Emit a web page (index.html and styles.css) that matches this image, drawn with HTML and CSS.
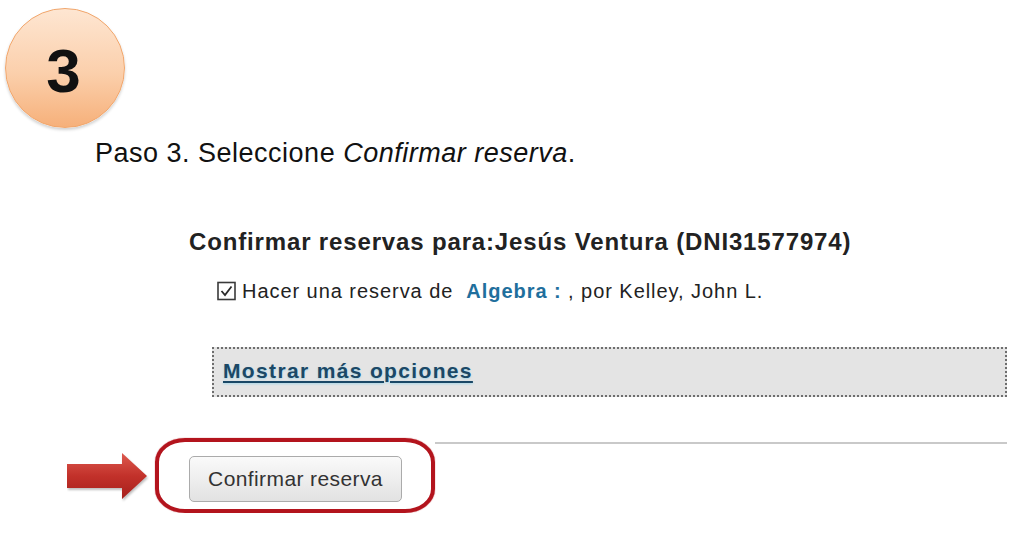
FILE: index.html
```html
<!DOCTYPE html>
<html>
<head>
<meta charset="utf-8">
<meta name="viewport" content="width=device-width, initial-scale=1.0">
<link rel="stylesheet" href="styles.css">
</head>
<body>

<div class='badge'><span class='badge-num'>3</span></div>

<p class='step'>Paso 3. Seleccione <i>Confirmar reserva</i>.</p>

<div class='form'>
  <h2 class='title'>Confirmar reservas para:Jesús Ventura (DNI31577974)</h2>

  <div class='item'>
    <svg class='check' width="19" height="20" viewBox="0 0 19 20">
      <rect x="1" y="1.5" width="17" height="17" fill="#fff" stroke="#3a3a3a" stroke-width="1.6"/>
      <path d="M4.5 10 L8 14 L14.5 5.5" fill="none" stroke="#2a2a2a" stroke-width="1.8"/>
    </svg>
    <span>Hacer una reserva de&nbsp; <b class='title-link'>Algebra :</b> , por Kelley, John L.</span>
  </div>

  <div class='more'>
    <a href="#" class='more-link'>Mostrar más opciones</a>
  </div>
</div>

<div class='actions'>
  <svg class='arrow' width="82" height="50" viewBox="0 0 82 50">
    <defs>
      <linearGradient id="ag" x1="0" y1="0" x2="0" y2="1">
        <stop offset="0" stop-color="#dd5a4f"/>
        <stop offset="0.5" stop-color="#c2312a"/>
        <stop offset="1" stop-color="#a6201c"/>
      </linearGradient>
    </defs>
    <path d="M0 11 H55 V0 L80 23 L55 46 V35 H0 Z" fill="url(#ag)" style="filter: drop-shadow(1px 2px 1px rgba(0,0,0,0.25))"/>
  </svg>
  <div class='ring'>
    <button class='btn'>Confirmar reserva</button>
  </div>
  <div class='rule'></div>
</div>

</body>
</html>
```

FILE: styles.css
```css
* {box-sizing: border-box;}
body {margin: 0; background: #fff; font-family: "Liberation Sans", Arial, sans-serif; color: #111;}

.badge {margin: 8px 0 0 5px; width: 120px; height: 120px; border-radius: 50%; border: 1px solid #f1a66c; background: linear-gradient(#fee6d2, #fbcfab 55%, #f6b07a); box-shadow: 0 2px 3px rgba(0,0,0,0.18); display: flex; align-items: center; justify-content: center;}
.badge-num {font-size: 62px; font-weight: bold; color: #111; line-height: 1; margin-top: 6px; margin-left: -3px;}

.step {margin: 10px 0 0 95px; font-size: 27px; line-height: 30px; letter-spacing: 0.5px; color: #111;}

.form {padding-left: 189px;}
.title {margin: 59px 0 0 0; font-size: 24px; line-height: 30px; letter-spacing: 0.85px; font-weight: bold; color: #222;}

.item {margin: 21px 0 0 28px; display: flex; align-items: center; font-size: 20px; line-height: 26px; letter-spacing: 0.95px; color: #222;}
.check {margin-right: 6px; flex: none;}
.title-link {color: #1f6f9d;}

.more {margin: 43px 17px 0 23px; height: 50px; border: 2px dotted #6e6e6e; background: #e4e4e4; padding: 10px 0 0 9px;}
.more-link {font-size: 21px; font-weight: bold; letter-spacing: 1.35px; color: #1b4866; text-decoration: underline; text-decoration-thickness: 2px; text-underline-offset: 3px; text-shadow: 0 1px 2px rgba(140,210,235,0.7);}

.actions {margin: 41px 17px 0 67px; display: flex; align-items: flex-start;}
.arrow {margin-top: 15px; margin-right: 6px; flex: none;}
.ring {width: 280px; height: 75px; border: 4px solid #b3141d; border-radius: 30px / 24px; padding: 14px 0 0 30px; box-shadow: 0 0 1px #b3141d; flex: none;}
.btn {width: 213px; height: 46px; border: 1px solid #ababab; border-radius: 5px; background: linear-gradient(#fafafa, #e2e2e2); font-family: "Liberation Sans", Arial, sans-serif; font-size: 21px; letter-spacing: 0.4px; color: #333; padding: 0;}
.rule {flex: 1; margin-top: 4px; border-top: 2px solid #c9c9c9;}
```
